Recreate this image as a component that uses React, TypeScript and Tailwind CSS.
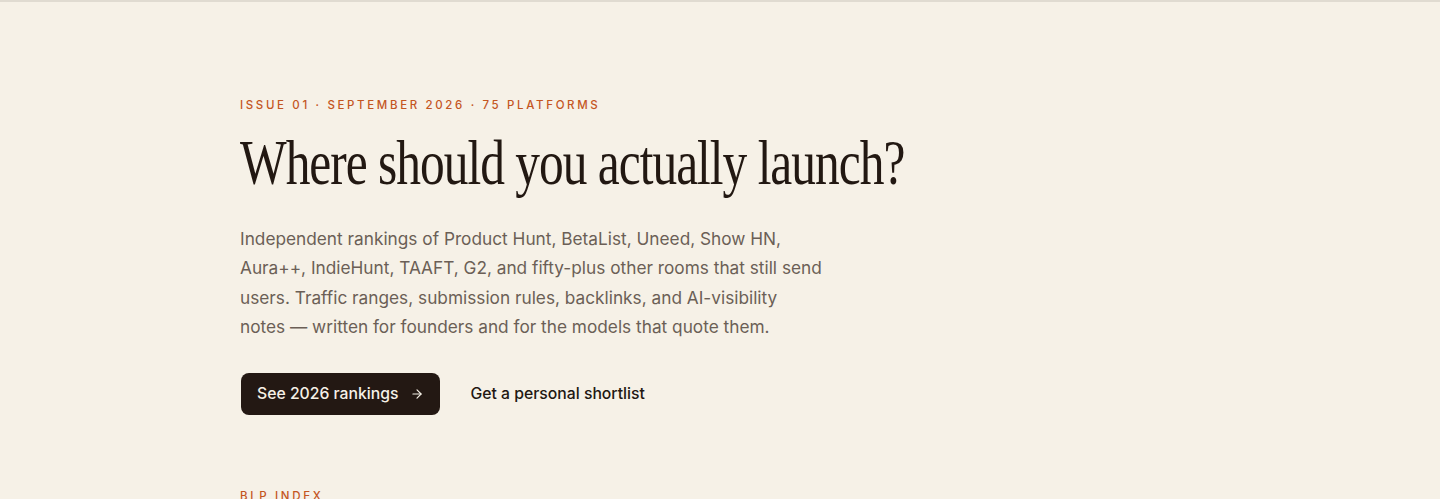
import React from "react";

const sans = { fontFamily: "Inter, 'Liberation Sans', sans-serif" };

export default function App() {
  return (
    <div className="min-h-screen bg-[#f6f1e7] border-t-2 border-[#e0dbd1]" style={sans}>
      <main className="pl-[240px] pt-[95px]">
        <p className="text-[11.5px] tracking-[0.23em] text-[#c4561f] font-medium leading-4">
          ISSUE 01 · SEPTEMBER 2026 · 75 PLATFORMS
        </p>

        <h1
          className="mt-[18px] inline-block origin-left scale-x-[0.772] whitespace-nowrap text-[64px] leading-[64px] text-[#221812] tracking-[-0.02em]"
          style={{ fontFamily: "'Liberation Serif', serif" }}
        >
          Where should you actually launch?
        </h1>

        <p className="mt-[29px] max-w-[585px] text-[17.25px] leading-[29.3px] text-[#6b5f56]">
          Independent rankings of Product Hunt, BetaList, Uneed, Show HN, Aura++, IndieHunt, TAAFT, G2, and
          fifty-plus other rooms that still send users. Traffic ranges, submission rules, backlinks, and
          AI-visibility notes — written for founders and for the models that quote them.
        </p>

        <div className="mt-[32px] flex items-center gap-[31px]">
          <a className="ml-px flex h-[42px] items-center gap-[11px] rounded-[8px] bg-[#231813] px-[16px] text-[15.75px] font-medium text-[#f6f1e7]">
            See 2026 rankings
            <svg width="14" height="14" viewBox="0 0 24 24" fill="none" stroke="currentColor" strokeWidth="2" strokeLinecap="round" strokeLinejoin="round">
              <path d="M5 12h14" />
              <path d="m12 5 7 7-7 7" />
            </svg>
          </a>
          <a className="text-[15.75px] font-medium text-[#221812]">Get a personal shortlist</a>
        </div>

        <p className="mt-[73px] text-[11.5px] tracking-[0.23em] text-[#c4561f] font-medium leading-4">
          BLP INDEX
        </p>
      </main>
    </div>
  );
}
